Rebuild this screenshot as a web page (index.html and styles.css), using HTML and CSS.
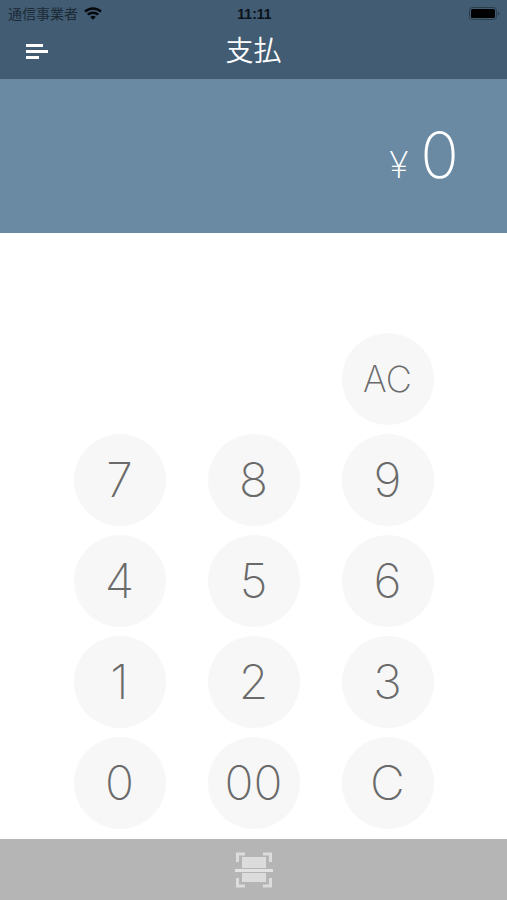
FILE: index.html
```
<!DOCTYPE html>
<html lang="ja">
<head>
<meta charset="utf-8">
<meta name="viewport" content="width=device-width, initial-scale=1">
<title>支払</title>
<link rel="stylesheet" href="styles.css">
</head>
<body>
<header class="header">
  <div class="status">
    <div class="carrier">
      <span>通信事業者</span>
      <svg class="wifi" viewBox="0 0 18 13" aria-hidden="true">
        <path d="M1 4.6a11.6 11.6 0 0 1 16 0" />
        <path d="M3.8 7.7a7.6 7.6 0 0 1 10.4 0" />
        <path class="wifi-dot" d="M6.2 9.9a4.2 4.2 0 0 1 5.6 0L9 12.7z" />
      </svg>
    </div>
    <span class="clock">11:11</span>
    <svg class="battery" viewBox="0 0 32 14" aria-hidden="true">
      <rect class="battery-case" x="0.5" y="0.5" width="27" height="12" rx="3" />
      <rect x="2" y="2" width="24" height="9" rx="1.5" />
      <path class="battery-tip" d="M29 4.5c2 .6 2 3.5 0 4z" />
    </svg>
  </div>
  <div class="titlebar">
    <button class="menu" type="button" aria-label="メニュー">
      <svg viewBox="0 0 22 15" aria-hidden="true">
        <path d="M0 0h17v3H0zM0 6h22v3H0zM0 12h13v3H0z" />
      </svg>
    </button>
    <h1 class="title">支払</h1>
  </div>
</header>
<main class="main">
  <output class="amount"><span class="currency">¥</span><span class="value">0</span></output>
  <div class="keypad">
    <button class="key key-clear" type="button">AC</button>
    <button class="key" type="button">7</button>
    <button class="key" type="button">8</button>
    <button class="key" type="button">9</button>
    <button class="key" type="button">4</button>
    <button class="key" type="button">5</button>
    <button class="key" type="button">6</button>
    <button class="key" type="button">1</button>
    <button class="key" type="button">2</button>
    <button class="key" type="button">3</button>
    <button class="key" type="button">0</button>
    <button class="key" type="button">00</button>
    <button class="key" type="button">C</button>
  </div>
</main>
<button class="scan" type="button" aria-label="スキャン">
  <svg viewBox="0 0 40 36" aria-hidden="true">
    <path class="scan-corner" d="M11 2H3.5v8M29 2h7.5v8M11 34H3.5v-8M29 34h7.5v-8" />
    <path class="scan-page" d="M8 5h24v11H8zM8 21h24v9H8z" />
    <path class="scan-line" d="M1 17h38v3H1z" />
  </svg>
</button>
</body>
</html>
```

FILE: styles.css
```
* {
  box-sizing: border-box;
}

body {
  margin: 0;
  min-height: 100vh;
  display: flex;
  flex-direction: column;
  background: #fff;
  color: #6a6a6a;
  font-family: Inter, "Noto Sans CJK JP", sans-serif;
}

button {
  border: 0;
  padding: 0;
  background: none;
  color: inherit;
  font: inherit;
  cursor: pointer;
}

svg {
  display: block;
}

.header {
  height: 79px;
  background: #415c73;
}

.status {
  display: grid;
  grid-template-columns: 1fr auto 1fr;
  align-items: center;
  height: 27px;
  padding: 0 6px 0 8px;
  color: #0b1219;
  font-size: 14px;
  line-height: 20px;
}

.carrier {
  display: flex;
  align-items: center;
  gap: 6px;
  color: #1c2a36;
}

.wifi {
  width: 18px;
  height: 13px;
  fill: none;
  stroke: #05080b;
  stroke-width: 2.5;
}

.wifi-dot {
  fill: #05080b;
  stroke: none;
}

.clock {
  font-family: "Liberation Sans", sans-serif;
  font-weight: 700;
}

.battery {
  justify-self: end;
  width: 32px;
  height: 14px;
  fill: #000;
}

.battery-case {
  fill: none;
  stroke: #2a3d4d;
}

.battery-tip {
  fill: #2a3d4d;
}

.titlebar {
  display: grid;
  grid-template-columns: 1fr auto 1fr;
  align-items: center;
  height: 48px;
  padding: 0 26px;
}

.menu {
  justify-self: start;
}

.menu svg {
  width: 22px;
  height: 15px;
  fill: #fff;
}

.title {
  margin: 0;
  color: #fff;
  font-size: 28px;
  font-weight: 350;
  line-height: 40px;
}

.main {
  flex: 1;
  display: flex;
  flex-direction: column;
}

.amount {
  display: flex;
  align-items: baseline;
  justify-content: flex-end;
  gap: 12px;
  height: 154px;
  padding: 36px 48px 0 0;
  background: #6a8aa4;
  color: #fff;
  font-weight: 200;
  line-height: 80px;
}

.currency {
  font-size: 36px;
}

.value {
  font-size: 64px;
}

.keypad {
  flex: 1;
  display: grid;
  grid-template-columns: repeat(3, 92px);
  grid-auto-rows: 92px;
  align-content: end;
  justify-content: center;
  gap: 9px 42px;
  padding-bottom: 10px;
}

.key {
  border-radius: 50%;
  background: #f7f7f7;
  font-size: 48px;
  font-weight: 200;
  line-height: 60px;
}

.key-clear {
  grid-column: 3;
  font-size: 36px;
}

.scan {
  display: flex;
  align-items: center;
  justify-content: center;
  height: 61px;
  background: #b5b5b5;
}

.scan svg {
  width: 40px;
  height: 36px;
}

.scan-corner {
  fill: none;
  stroke: #dcdcdc;
  stroke-width: 3;
}

.scan-page {
  fill: #dcdcdc;
}

.scan-line {
  fill: #e2e2e2;
}
```
